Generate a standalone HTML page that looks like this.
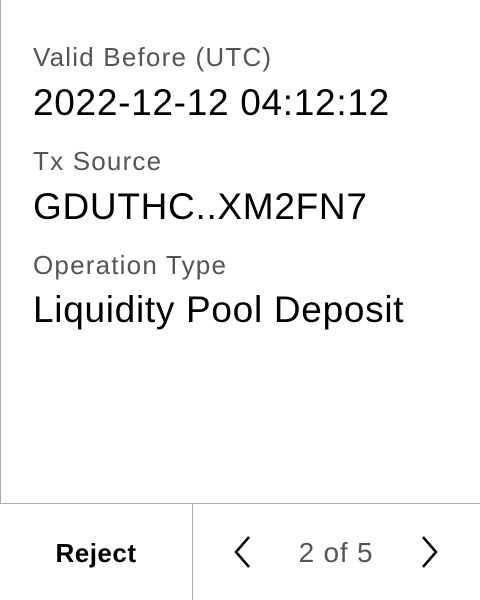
<!DOCTYPE html>
<html><head><style>
html,body{margin:0;padding:0;background:#fff;}
body{width:480px;height:600px;position:relative;overflow:hidden;font-family:"Liberation Sans",sans-serif;}
.lb{position:absolute;left:0;top:0;width:1px;height:504px;background:#aaa;}
.t{position:absolute;left:33px;white-space:nowrap;line-height:1;}
.l{font-size:26px;color:#555;letter-spacing:1.2px;}
.v{font-size:37px;color:#000;letter-spacing:0.7px;}
.hl{position:absolute;left:0;top:503px;width:480px;height:1px;background:#aaa;}
.vl{position:absolute;left:192px;top:504px;width:1px;height:96px;background:#aaa;}
</style></head><body>
<div class="lb"></div>
<div class="t l" style="top:44px">Valid Before (UTC)</div>
<div class="t v" style="top:84px">2022-12-12 04:12:12</div>
<div class="t l" style="top:148px">Tx Source</div>
<div class="t v" style="top:188px">GDUTHC..XM2FN7</div>
<div class="t l" style="top:252px">Operation Type</div>
<div class="t v" style="top:291px">Liquidity Pool Deposit</div>
<div class="hl"></div><div class="vl"></div>
<div style="position:absolute;left:0;width:192px;top:540px;text-align:center;font-size:26px;font-weight:bold;line-height:1;letter-spacing:0.5px">Reject</div>
<div style="position:absolute;left:270px;width:132px;top:539px;text-align:center;font-size:28px;color:#555;line-height:1;letter-spacing:0.8px">2 of 5</div>
<svg style="position:absolute;left:230px;top:535px" width="24" height="34"><path d="M19 2 L6 17 L19 32" fill="none" stroke="#000" stroke-width="2.5"/></svg>
<svg style="position:absolute;left:418px;top:535px" width="24" height="34"><path d="M5 2 L18 17 L5 32" fill="none" stroke="#000" stroke-width="2.5"/></svg>
</body></html>
